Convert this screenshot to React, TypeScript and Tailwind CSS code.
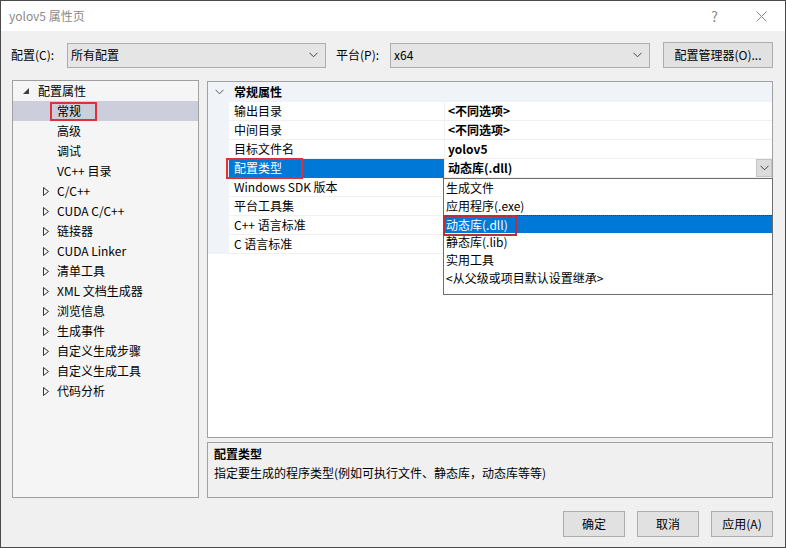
import React from 'react';

const font = "font-['Noto_Sans_CJK_SC','Microsoft_YaHei',sans-serif]";

const ChevronDown = ({ color = '#444' }: { color?: string }) => (
  <svg width="9" height="6" viewBox="0 0 9 6">
    <path d="M0.5 0.8 L4.5 4.8 L8.5 0.8" fill="none" stroke={color} strokeWidth="1" />
  </svg>
);

const Collapsed = () => (
  <svg width="6" height="9" viewBox="0 0 6 9">
    <polygon points="0.5,0.5 5.5,4.5 0.5,8.5" fill="none" stroke="#333" strokeWidth="1" />
  </svg>
);

const Expanded = () => (
  <svg width="6" height="6" viewBox="0 0 6 6">
    <polygon points="6,0 6,6 0,6" fill="#404040" />
  </svg>
);

type TreeItem = { label: string; kind: 'root' | 'leaf' | 'branch'; selected?: boolean };

const tree: TreeItem[] = [
  { label: '配置属性', kind: 'root' },
  { label: '常规', kind: 'leaf', selected: true },
  { label: '高级', kind: 'leaf' },
  { label: '调试', kind: 'leaf' },
  { label: 'VC++ 目录', kind: 'leaf' },
  { label: 'C/C++', kind: 'branch' },
  { label: 'CUDA C/C++', kind: 'branch' },
  { label: '链接器', kind: 'branch' },
  { label: 'CUDA Linker', kind: 'branch' },
  { label: '清单工具', kind: 'branch' },
  { label: 'XML 文档生成器', kind: 'branch' },
  { label: '浏览信息', kind: 'branch' },
  { label: '生成事件', kind: 'branch' },
  { label: '自定义生成步骤', kind: 'branch' },
  { label: '自定义生成工具', kind: 'branch' },
  { label: '代码分析', kind: 'branch' },
];

const props: { name: string; value: string; selected?: boolean }[] = [
  { name: '输出目录', value: '<不同选项>' },
  { name: '中间目录', value: '<不同选项>' },
  { name: '目标文件名', value: 'yolov5' },
  { name: '配置类型', value: '动态库(.dll)', selected: true },
  { name: 'Windows SDK 版本', value: '' },
  { name: '平台工具集', value: '' },
  { name: 'C++ 语言标准', value: '' },
  { name: 'C 语言标准', value: '' },
];

const options = ['生成文件', '应用程序(.exe)', '动态库(.dll)', '静态库(.lib)', '实用工具', '<从父级或项目默认设置继承>'];

export default function App() {
  return (
    <div className={`${font} w-[786px] h-[548px] border border-[#4a4a4a] bg-[#f0f0f0] text-[12px] text-black flex flex-col overflow-hidden`}>
      {/* Title bar */}
      <div className="h-[30px] bg-white flex items-center pl-[8px] pr-[18px] shrink-0">
        <span className="text-[#8a8a8a] text-[12px]">yolov5 属性页</span>
        <span className="ml-auto text-[#8a8a8a] text-[14px] mr-[38px]">?</span>
        <svg width="11" height="11" viewBox="0 0 11 11">
          <path d="M0.5 0.5 L10.5 10.5 M10.5 0.5 L0.5 10.5" stroke="#8a8a8a" strokeWidth="1" />
        </svg>
      </div>

      {/* Toolbar */}
      <div className="flex items-center pl-[10px] pt-[11px] h-[37px] shrink-0">
        <span className="w-[56px]">配置(C):</span>
        <div className="w-[259px] h-[25px] bg-[#e5e5e5] border border-[#adadad] flex items-center pl-[3px] pr-[7px]">
          <span>所有配置</span>
          <span className="ml-auto"><ChevronDown /></span>
        </div>
        <span className="ml-[10px] w-[54px]">平台(P):</span>
        <div className="w-[260px] h-[25px] bg-[#e5e5e5] border border-[#adadad] flex items-center pl-[3px] pr-[7px]">
          <span>x64</span>
          <span className="ml-auto"><ChevronDown /></span>
        </div>
        <button className="ml-[13px] w-[110px] h-[26px] bg-[#e1e1e1] border border-[#adadad] flex items-center justify-center">
          配置管理器(O)...
        </button>
      </div>

      {/* Main */}
      <div className="flex gap-[8px] pl-[11px] pr-[12px] pt-[12px] h-[430px] shrink-0">
        {/* Tree */}
        <div className="w-[187px] h-[418px] border border-[#a0a0a0] bg-[#f5f5f5] flex flex-col">
          {tree.map((t) => (
            <div
              key={t.label}
              className={`relative h-[20px] flex items-center shrink-0 ${t.selected ? 'bg-[#cccedb]' : ''} ${t.kind === 'root' ? 'pl-[10px]' : 'pl-[30px]'}`}
            >
              <span className={`flex items-center ${t.kind === 'root' ? 'w-[15px]' : 'w-[14px]'}`}>
                {t.kind === 'root' && <Expanded />}
                {t.kind === 'branch' && <Collapsed />}
              </span>
              <span>{t.label}</span>
              {t.selected && (
                <div className="absolute left-[37px] top-[1px] w-[47px] h-[19px] border-2 border-[#e0303a]" />
              )}
            </div>
          ))}
        </div>

        {/* Right column */}
        <div className="flex-1 flex flex-col gap-[4px]">
          <div className="relative mt-[1px] h-[357px] border border-[#a0a0a0] bg-white flex flex-col">
            <div className="h-[20px] bg-[#f0f4f9] flex items-center shrink-0">
              <span className="w-[26px] pl-[7px] flex items-center"><ChevronDown color="#555" /></span>
              <span className="font-bold">常规属性</span>
            </div>
            {props.map((p) => (
              <div key={p.name} className="flex h-[19px] shrink-0">
                <div className="w-[21px] bg-[#f0f4f9]" />
                <div
                  className={`w-[215px] flex items-center pl-[5px] border-b ${p.selected ? 'bg-[#0078d7] text-white border-[#0078d7]' : 'border-[#f0f0f0]'}`}
                >
                  {p.name}
                </div>
                <div className="flex-1 flex items-center pl-[3px] font-bold border-l border-b border-[#f0f0f0]">
                  <span>{p.value}</span>
                  {p.selected && (
                    <span className="ml-auto w-[16px] h-[18px] bg-[#dcdcdc] border border-[#c4c4c4] flex items-center justify-center">
                      <ChevronDown />
                    </span>
                  )}
                </div>
              </div>
            ))}

            {/* annotation box on selected property */}
            <div className="absolute left-[18px] top-[76px] w-[77px] h-[21px] border-2 border-[#e0303a]" />

            {/* dropdown list */}
            <div className="absolute left-[235px] top-[96px] w-[330px] h-[117px] bg-white border border-[#6e6e6e] font-normal">
              {options.map((o) => {
                const sel = o === '动态库(.dll)';
                return (
                  <div
                    key={o}
                    className={`relative h-[18px] flex items-center pl-[2px] ${sel ? 'bg-[#0078d7] text-white border-t border-dotted border-[#333]' : ''}`}
                  >
                    {o}
                    {sel && <div className="absolute left-[-1px] top-[-1px] w-[74px] h-[21px] border-2 border-[#b8303a]" />}
                  </div>
                );
              })}
            </div>
          </div>

          <div className="h-[56px] border border-[#a0a0a0] bg-[#f0f0f0] pl-[6px] pt-[1px] flex flex-col">
            <span className="font-bold leading-[20px]">配置类型</span>
            <span className="leading-[17px]">指定要生成的程序类型(例如可执行文件、静态库，动态库等等)</span>
          </div>
        </div>
      </div>

      {/* Footer */}
      <div className="flex justify-end gap-[12px] pr-[12px] pt-[13px]">
        <button className="w-[62px] h-[26px] bg-[#e1e1e1] border border-[#adadad]">确定</button>
        <button className="w-[62px] h-[26px] bg-[#e1e1e1] border border-[#adadad]">取消</button>
        <button className="w-[62px] h-[26px] bg-[#e1e1e1] border border-[#adadad]">应用(A)</button>
      </div>
    </div>
  );
}
